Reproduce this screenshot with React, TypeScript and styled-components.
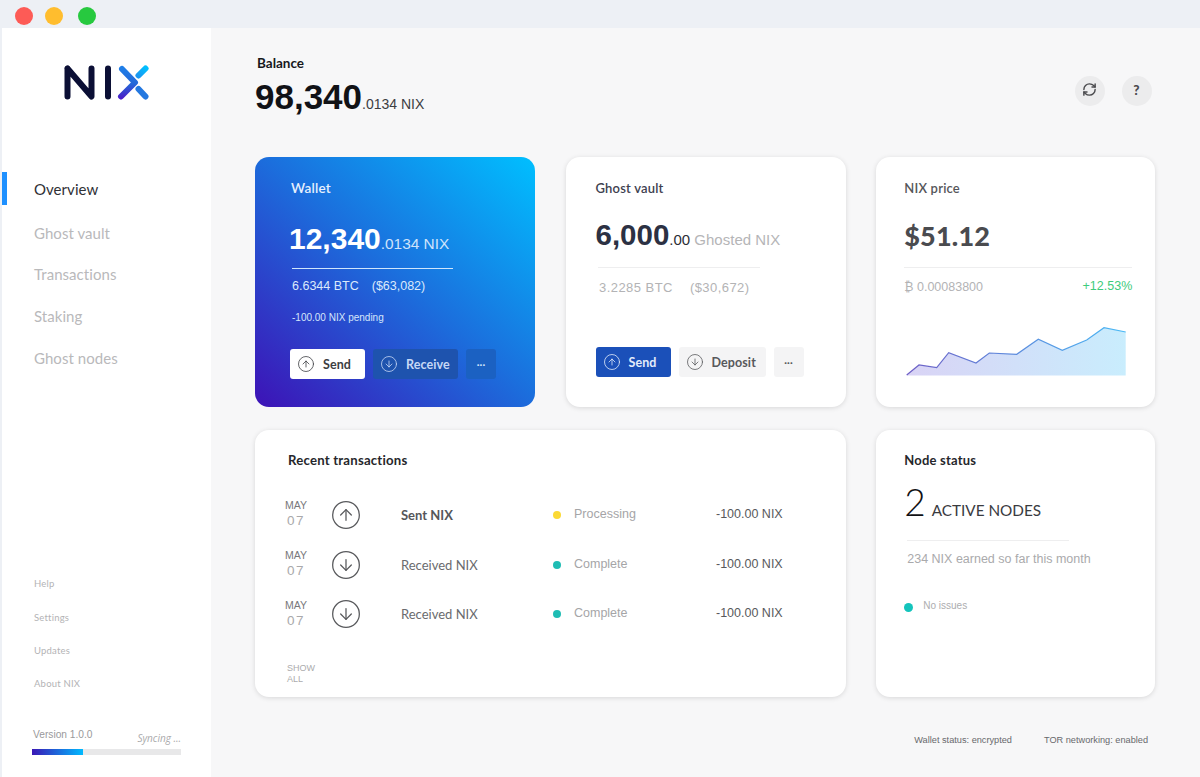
import React from "react";
import styled, { createGlobalStyle } from "styled-components";
import { CircleArrowUp, CircleArrowDown, RefreshCw } from "lucide-react";

const Global = createGlobalStyle`
  html, body { margin: 0; padding: 0; background: #f7f7f8; }
  * { box-sizing: border-box; }
  body { font-family: Lato, "Noto Sans", sans-serif; }
`;

const UI = `Lato, "Noto Sans", sans-serif`;
const NUM = `"Liberation Sans", Arial, sans-serif`;

const Screen = styled.div`
  width: 1200px;
  height: 777px;
  overflow: hidden;
  display: flex;
  flex-direction: column;
  background: #f7f7f8;
`;
const TitleBar = styled.header`
  height: 28px;
  flex: none;
  background: #edf0f5;
  display: flex;
  align-items: flex-start;
  padding: 7px 0 0 15px;
  gap: 12px;
`;
const Light = styled.span<{ $color: string; $extra?: number }>`
  width: 18px;
  height: 18px;
  border-radius: 50%;
  background: ${(p) => p.$color};
  margin-left: ${(p) => p.$extra ?? 0}px;
`;
const Body = styled.div`
  flex: 1;
  display: flex;
  min-height: 0;
`;
const Sidebar = styled.aside`
  width: 211px;
  flex: none;
  background: #fff;
  border-left: 2px solid #edf0f5;
  display: flex;
  flex-direction: column;
  padding: 37px 0 22px;
`;
const Logo = styled.svg`
  width: 85px;
  height: 35px;
  margin-left: 62px;
  flex: none;
`;
const Nav = styled.nav`
  margin-top: 68px;
  display: flex;
  flex-direction: column;
`;
const NavItem = styled.a<{ $active?: boolean }>`
  position: relative;
  height: 41.7px;
  display: flex;
  align-items: center;
  padding-left: 32px;
  font-size: 15px;
  letter-spacing: 0.05px;
  color: ${(p) => (p.$active ? "#2f3035" : "#b9b9bb")};
  margin-bottom: ${(p) => (p.$active ? 2 : 0)}px;
  ${(p) =>
    p.$active &&
    `&::before { content: ""; position: absolute; left: 0; top: 4px; width: 5px; height: 33px; background: #1e90ff; }`}
`;
const FooterLinks = styled.div`
  margin-top: auto;
  display: flex;
  flex-direction: column;
`;
const FooterLink = styled.a`
  height: 33.2px;
  display: flex;
  align-items: center;
  padding-left: 32px;
  font-size: 9.5px;
  letter-spacing: 0.2px;
  color: #b3b3b5;
`;
const VersionRow = styled.div`
  margin: 27.5px 30px 0 30px;
  height: 14px;
  display: flex;
  justify-content: space-between;
`;
const VersionText = styled.span`
  font-family: ${NUM};
  font-size: 10.2px;
  line-height: 14px;
  padding-left: 1px;
  color: #99999b;
`;
const Syncing = styled.span`
  font-family: "Open Sans", sans-serif;
  font-style: italic;
  font-size: 10px;
  line-height: 14px;
  color: #aaaaac;
  transform: translateY(3px);
`;
const SyncTrack = styled.div`
  margin: 7.5px 30px 0 30px;
  height: 6px;
  background: #e8e8e9;
`;
const SyncFill = styled.div`
  height: 100%;
  background: linear-gradient(to right, #3a17b5, #00baff);
`;
const Main = styled.main`
  flex: 1;
  min-width: 0;
  padding: 0 44px 0 44px;
`;
const Header = styled.section`
  height: 129px;
  display: flex;
  justify-content: space-between;
`;
const BalanceBlock = styled.div`
  padding-top: 27px;
`;
const BalanceLabel = styled.div`
  margin-left: 2px;
  font-size: 13.5px;
  font-weight: 700;
  line-height: 16px;
  color: #17181c;
`;
const BalanceLine = styled.div`
  margin-top: 6px;
  height: 40px;
  line-height: 40px;
  font-family: ${NUM};
  color: #111216;
  white-space: nowrap;
`;
const BalanceBig = styled.span`
  font-size: 35px;
  font-weight: 700;
`;
const BalanceSmall = styled.span`
  font-size: 14px;
  color: #3c3d42;
`;
const HeaderActions = styled.div`
  display: flex;
  gap: 17px;
  margin: 48px 4px 0 0;
`;
const RoundButton = styled.button`
  width: 30px;
  height: 30px;
  border: 0;
  padding: 0 1px 3px 0;
  border-radius: 50%;
  background: #ececed;
  color: #4a4a4d;
  font-family: ${UI};
  font-weight: 900;
  font-size: 13.5px;
  display: flex;
  align-items: center;
  justify-content: center;
`;
const Grid = styled.section`
  display: grid;
  grid-template-columns: 279.75px 280px 279px;
  grid-template-rows: 250px 267px;
  column-gap: 30.75px;
  row-gap: 23px;
`;
const Card = styled.article<{ $span?: number; $pl: number; $pt?: number }>`
  grid-column: span ${(p) => p.$span ?? 1};
  background: #fff;
  border-radius: 14px;
  box-shadow: 0 1px 5px rgba(0, 0, 0, 0.13);
  padding: ${(p) => p.$pt ?? 22}px 22px 0 ${(p) => p.$pl}px;
  min-width: 0;
`;
const WalletCard = styled(Card)`
  background: linear-gradient(to top right, #3d12b6 0%, #1b6fdd 52%, #00bfff 100%);
  box-shadow: none;
  color: #fff;
`;
const CardTitle = styled.h2<{ $color?: string; $ml?: number; $bold?: boolean; $size?: number }>`
  margin: 0 0 0 ${(p) => p.$ml ?? 0}px;
  font-size: ${(p) => p.$size ?? 13}px;
  line-height: 16px;
  font-weight: ${(p) => (p.$bold ? 700 : 600)};
  letter-spacing: 0.2px;
  color: ${(p) => p.$color ?? "#3e4150"};
`;
const AmountLine = styled.div<{ $mt: number; $ml?: number; $color?: string }>`
  margin: ${(p) => p.$mt}px 0 0 ${(p) => p.$ml ?? 0}px;
  height: 36px;
  line-height: 36px;
  font-family: ${NUM};
  white-space: nowrap;
  color: ${(p) => p.$color ?? "#2c3143"};
`;
const AmountBig = styled.span<{ $size: number }>`
  font-size: ${(p) => p.$size}px;
  font-weight: 700;
`;
const AmountSmall = styled.span<{ $color?: string; $size?: number }>`
  font-size: ${(p) => p.$size ?? 15}px;
  color: ${(p) => p.$color ?? "inherit"};
`;
const PriceValue = styled.div`
  margin-top: 22px;
  height: 36px;
  line-height: 36px;
  font-family: ${UI};
  font-size: 27px;
  font-weight: 900;
  letter-spacing: 0.2px;
  color: #4a4b4f;
`;
const Rule = styled.hr<{ $mt: number; $ml?: number; $w: number; $color?: string }>`
  margin: ${(p) => p.$mt}px 0 0 ${(p) => p.$ml ?? 0}px;
  border: 0;
  height: 1px;
  width: ${(p) => p.$w}px;
  background: ${(p) => p.$color ?? "#eeeeef"};
`;
const SubLine = styled.div<{ $mt: number; $ml?: number; $color: string; $gap: number; $size?: number; $track?: number }>`
  margin: ${(p) => p.$mt}px 0 0 ${(p) => p.$ml ?? 0}px;
  display: flex;
  gap: ${(p) => p.$gap}px;
  font-family: ${NUM};
  font-size: ${(p) => p.$size ?? 12.5}px;
  letter-spacing: ${(p) => p.$track ?? 0}px;
  line-height: 16px;
  color: ${(p) => p.$color};
  white-space: nowrap;
`;
const Pending = styled.div`
  margin-top: 17px;
  font-family: ${NUM};
  font-size: 10px;
  line-height: 14px;
  color: #d5e6fb;
`;
const Actions = styled.div<{ $mt: number; $ml?: number }>`
  margin: ${(p) => p.$mt}px 0 0 ${(p) => p.$ml ?? 0}px;
  display: flex;
  gap: 8px;
`;
const palette = {
  white: ["#ffffff", "#3c3d42"],
  navy: ["#1e53ae", "#c7d8f5"],
  navyMore: ["#1b61c2", "#cfe0f8"],
  blue: ["#1b50b9", "#e4edfb"],
  grey: ["#f4f4f5", "#58595c"],
} as const;
const ActionButton = styled.button<{ $w: number; $kind: keyof typeof palette }>`
  width: ${(p) => p.$w}px;
  height: 30px;
  border: 0;
  border-radius: 3px;
  padding: 0 0 0 7px;
  display: flex;
  align-items: center;
  gap: 8px;
  background: ${(p) => palette[p.$kind][0]};
  color: ${(p) => palette[p.$kind][1]};
  font-family: ${UI};
  font-size: 12.5px;
  font-weight: 700;
  letter-spacing: 0.1px;
`;
const MoreButton = styled(ActionButton)`
  justify-content: center;
  padding: 0;
  font-size: 10px;
`;
const PriceRow = styled.div`
  margin-top: 11px;
  width: 228px;
  display: flex;
  justify-content: space-between;
  align-items: center;
  font-family: ${NUM};
  font-size: 12.5px;
  line-height: 16px;
  color: #b3b3b5;
`;
const Gain = styled.span`
  color: #3ecb7c;
  transform: translateY(-1px);
`;
const Chart = styled.svg`
  display: block;
  margin: 30px 0 0 0;
  width: 228px;
  height: 52px;
`;
const TxList = styled.div`
  margin: 22px 0 0 -2px;
`;
const TxRow = styled.div`
  height: 49.7px;
  display: grid;
  grid-template-columns: 46px 69px 152px 21px 142px auto;
  align-items: center;
`;
const DateCell = styled.div`
  font-family: ${NUM};
  margin-left: -1px;
`;
const Month = styled.div`
  font-size: 10.5px;
  line-height: 12px;
  color: #77787b;
`;
const Day = styled.div`
  font-size: 13.5px;
  line-height: 19px;
  letter-spacing: 1.5px;
  margin-left: 2px;
  color: #a9a9ab;
`;
const TxIcon = styled.span`
  display: flex;
  color: #58595c;
  margin-left: -2px;
`;
const TxName = styled.span<{ $strong?: boolean }>`
  font-size: 13px;
  font-weight: ${(p) => (p.$strong ? 700 : 400)};
  color: ${(p) => (p.$strong ? "#55565a" : "#6a6b6e")};
`;
const Dot = styled.span<{ $color: string }>`
  width: 8px;
  height: 8px;
  border-radius: 50%;
  background: ${(p) => p.$color};
`;
const TxStatus = styled.span`
  font-family: ${NUM};
  font-size: 12.5px;
  color: #a5a5a7;
  transform: translateY(-1px);
`;
const TxAmount = styled.span`
  font-family: ${NUM};
  font-size: 12.5px;
  color: #58595c;
  white-space: nowrap;
  transform: translateY(-1px);
`;
const ShowAll = styled.a`
  display: block;
  width: 40px;
  margin: 24px 0 0 -1px;
  font-family: ${NUM};
  font-size: 9px;
  line-height: 11px;
  color: #ababad;
`;
const CountLine = styled.div`
  margin-top: 12px;
  height: 44px;
  display: flex;
  align-items: baseline;
  gap: 6px;
  line-height: 44px;
`;
const CountNumber = styled.span`
  font-size: 37px;
  font-weight: 300;
  color: #111114;
`;
const CountLabel = styled.span`
  font-size: 15.3px;
  color: #3a3b3f;
`;
const IssueRow = styled.div`
  margin: 32px 0 0 0;
  display: flex;
  align-items: center;
  gap: 10px;
`;
const IssueDot = styled(Dot)`
  width: 9px;
  height: 9px;
  background: #14c4bc;
  transform: translateY(1px);
`;
const IssueText = styled.span`
  font-family: ${NUM};
  font-size: 10px;
  line-height: 14px;
  color: #adadaf;
`;
const StatusBar = styled.footer`
  margin-top: 36px;
  display: flex;
  justify-content: flex-end;
  gap: 32px;
  padding-right: 8px;
  font-family: ${NUM};
  font-size: 9.2px;
  line-height: 14px;
  color: #68696c;
`;

const chartPts: [number, number][] = [
  [2.7, 50], [15, 40], [32.7, 42.7], [44.7, 27.7], [72, 38], [85.3, 28], [112.7, 29.3],
  [134.3, 14.3], [158.3, 25.3], [182.7, 15], [200, 2.7], [221.7, 7],
];
const linePts = chartPts.map((p) => p.join(",")).join(" ");

type Tx = { name: string; up: boolean; status: string; color: string };
const txs: Tx[] = [
  { name: "Sent NIX", up: true, status: "Processing", color: "#fbd935" },
  { name: "Received NIX", up: false, status: "Complete", color: "#1fbdb4" },
  { name: "Received NIX", up: false, status: "Complete", color: "#1fbdb4" },
];

export default function App() {
  return (
    <Screen>
      <Global />
      <TitleBar>
        <Light $color="#fd5b56" />
        <Light $color="#ffbd2e" />
        <Light $color="#27c93f" $extra={3} />
      </TitleBar>
      <Body>
        <Sidebar>
          <Logo viewBox="0 0 85 35" fill="none" strokeLinecap="round" strokeLinejoin="round" strokeWidth={6}>
            <defs>
              <linearGradient id="xa" gradientUnits="userSpaceOnUse" x1="56" y1="2" x2="56" y2="33">
                <stop offset="0" stopColor="#1f7fe8" />
                <stop offset="0.55" stopColor="#2467d8" />
                <stop offset="1" stopColor="#4a1fc8" />
              </linearGradient>
              <linearGradient id="xb" gradientUnits="userSpaceOnUse" x1="82" y1="3" x2="74" y2="11">
                <stop offset="0" stopColor="#00bfff" />
                <stop offset="1" stopColor="#1a96f0" />
              </linearGradient>
            </defs>
            <path d="M3.5 3.5V31.5M3.5 3.5L27.5 31.5V3.5" stroke="#0b0f35" />
            <path d="M44 3.5V31.5" stroke="#0b0f35" />
            <path d="M58 4L71 17.5L57 31.5" stroke="url(#xa)" />
            <path d="M81.5 3.5L74.5 10.5" stroke="url(#xb)" />
            <path d="M74.5 24L81.5 31.5" stroke="#2478e0" />
          </Logo>
          <Nav>
            <NavItem $active>Overview</NavItem>
            <NavItem>Ghost vault</NavItem>
            <NavItem>Transactions</NavItem>
            <NavItem>Staking</NavItem>
            <NavItem>Ghost nodes</NavItem>
          </Nav>
          <FooterLinks>
            <FooterLink>Help</FooterLink>
            <FooterLink>Settings</FooterLink>
            <FooterLink>Updates</FooterLink>
            <FooterLink>About NIX</FooterLink>
          </FooterLinks>
          <VersionRow>
            <VersionText>Version 1.0.0</VersionText>
            <Syncing>Syncing ...</Syncing>
          </VersionRow>
          <SyncTrack>
            <SyncFill style={{ width: "34%" }} />
          </SyncTrack>
        </Sidebar>
        <Main>
          <Header>
            <BalanceBlock>
              <BalanceLabel>Balance</BalanceLabel>
              <BalanceLine>
                <BalanceBig>98,340</BalanceBig>
                <BalanceSmall>.0134 NIX</BalanceSmall>
              </BalanceLine>
            </BalanceBlock>
            <HeaderActions>
              <RoundButton aria-label="Refresh">
                <RefreshCw size={15} strokeWidth={2.3} />
              </RoundButton>
              <RoundButton>?</RoundButton>
            </HeaderActions>
          </Header>
          <Grid>
            <WalletCard $pl={37} $pt={23}>
              <CardTitle $color="#e6f0fd" $ml={-1} $size={13.5}>Wallet</CardTitle>
              <AmountLine $mt={25} $ml={-3} $color="#fff">
                <AmountBig $size={30}>12,340</AmountBig>
                <AmountSmall $color="#cfe3fb" $size={15.4}>.0134 NIX</AmountSmall>
              </AmountLine>
              <Rule $mt={11} $w={161} $color="#cfe6fc" />
              <SubLine $mt={9} $color="#dbe9fb" $gap={13}>
                <span>6.6344 BTC</span>
                <span>($63,082)</span>
              </SubLine>
              <Pending>-100.00 NIX pending</Pending>
              <Actions $mt={24} $ml={-2}>
                <ActionButton $w={75} $kind="white">
                  <CircleArrowUp size={18} strokeWidth={1.05} />
                  Send
                </ActionButton>
                <ActionButton $w={85} $kind="navy">
                  <CircleArrowDown size={18} strokeWidth={1.05} />
                  Receive
                </ActionButton>
                <MoreButton $w={30} $kind="navyMore">···</MoreButton>
              </Actions>
            </WalletCard>
            <Card $pl={30} $pt={23}>
              <CardTitle>Ghost vault</CardTitle>
              <AmountLine $mt={21}>
                <AmountBig $size={29.5}>6,000</AmountBig>
                <AmountSmall $color="#2c2d35">.00 </AmountSmall>
                <AmountSmall $color="#b5b5b7">Ghosted NIX</AmountSmall>
              </AmountLine>
              <Rule $mt={14} $ml={2} $w={162} />
              <SubLine $mt={12} $ml={3.5} $color="#b3b3b5" $gap={17} $size={13} $track={0.45}>
                <span>3.2285 BTC</span>
                <span>($30,672)</span>
              </SubLine>
              <Actions $mt={51} $ml={0}>
                <ActionButton $w={75} $kind="blue">
                  <CircleArrowUp size={18} strokeWidth={1.05} />
                  Send
                </ActionButton>
                <ActionButton $w={87} $kind="grey">
                  <CircleArrowDown size={18} strokeWidth={1.05} />
                  Deposit
                </ActionButton>
                <MoreButton $w={30} $kind="grey">···</MoreButton>
              </Actions>
            </Card>
            <Card $pl={28} $pt={23}>
              <CardTitle $color="#55565a">NIX price</CardTitle>
              <PriceValue>$51.12</PriceValue>
              <Rule $mt={13} $w={228} />
              <PriceRow>
                <span>₿ 0.00083800</span>
                <Gain>+12.53%</Gain>
              </PriceRow>
              <Chart viewBox="0 0 228 52">
                <defs>
                  <linearGradient id="fillG" x1="0" x2="1" y1="0" y2="0">
                    <stop offset="0" stopColor="#d9d3f5" />
                    <stop offset="1" stopColor="#c9edfd" />
                  </linearGradient>
                  <linearGradient id="lineG" x1="0" x2="1" y1="0" y2="0">
                    <stop offset="0" stopColor="#6f5fc6" />
                    <stop offset="1" stopColor="#4ab9f5" />
                  </linearGradient>
                </defs>
                <polygon points={`${linePts} 221.7,50.5 2.7,50.5`} fill="url(#fillG)" />
                <polyline points={linePts} fill="none" stroke="url(#lineG)" strokeWidth={1.2} />
              </Chart>
            </Card>
            <Card $span={2} $pl={33}>
              <CardTitle $color="#26272b" $bold $size={13.2}>Recent transactions</CardTitle>
              <TxList>
                {txs.map((t, i) => (
                  <TxRow key={i}>
                    <DateCell>
                      <Month>MAY</Month>
                      <Day>07</Day>
                    </DateCell>
                    <TxIcon>
                      {t.up ? <CircleArrowUp size={32} strokeWidth={0.95} /> : <CircleArrowDown size={32} strokeWidth={0.95} />}
                    </TxIcon>
                    <TxName $strong={t.up}>{t.name}</TxName>
                    <Dot $color={t.color} />
                    <TxStatus>{t.status}</TxStatus>
                    <TxAmount>-100.00 NIX</TxAmount>
                  </TxRow>
                ))}
              </TxList>
              <ShowAll>SHOW ALL</ShowAll>
            </Card>
            <Card $pl={28}>
              <CardTitle $color="#26272b" $bold>Node status</CardTitle>
              <CountLine>
                <CountNumber>2</CountNumber>
                <CountLabel>ACTIVE NODES</CountLabel>
              </CountLine>
              <Rule $mt={16} $ml={3} $w={162} />
              <SubLine $mt={10} $ml={3} $color="#aaaaac" $gap={0}>
                <span>234 NIX earned so far this month</span>
              </SubLine>
              <IssueRow>
                <IssueDot $color="#14c4bc" />
                <IssueText>No issues</IssueText>
              </IssueRow>
            </Card>
          </Grid>
          <StatusBar>
            <span>Wallet status: encrypted</span>
            <span>TOR networking: enabled</span>
          </StatusBar>
        </Main>
      </Body>
    </Screen>
  );
}
